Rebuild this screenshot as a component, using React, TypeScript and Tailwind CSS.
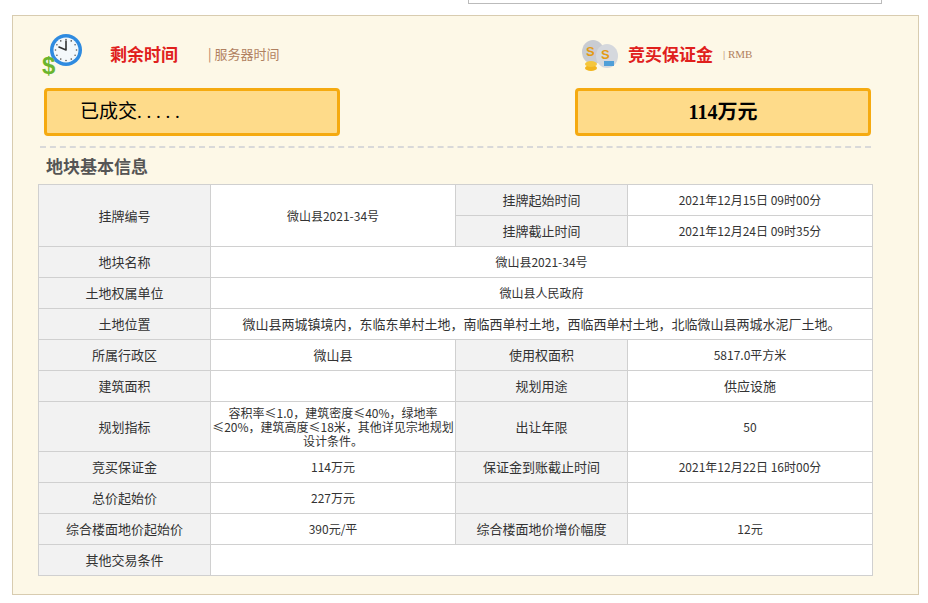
import React from "react";

const L = "bg-[#f2f2f2] text-center border border-[#d0d0d0] text-[13px] text-[#333]";
const V = "bg-white text-center border border-[#d0d0d0] text-[12px] text-[#333]";

function Clock() {
  return (
    <svg width="48" height="48" viewBox="0 0 48 48">
      <circle cx="28" cy="20" r="16" fill="#2f8be0" />
      <circle cx="28" cy="20" r="12.5" fill="#f4f8fb" />
      {[0, 1, 2, 3, 4, 5, 6, 7, 8, 9, 10, 11].map((i) => {
        const a = (i * Math.PI) / 6;
        return <circle key={i} cx={28 + 10.5 * Math.sin(a)} cy={20 - 10.5 * Math.cos(a)} r="0.8" fill="#555" />;
      })}
      <path d="M28 20 L28 11 M28 20 L21 17" stroke="#333" strokeWidth="1.6" strokeLinecap="round" />
      <text x="4" y="44" fontSize="24" fontWeight="bold" fill="#6ab52d" fontFamily="Liberation Sans, sans-serif">$</text>
    </svg>
  );
}

function Money() {
  return (
    <svg width="48" height="48" viewBox="0 0 48 48">
      <ellipse cx="15" cy="22" rx="11" ry="12" fill="#c9ccd2" />
      <ellipse cx="29" cy="26" rx="11" ry="12" fill="#d5d8dd" />
      <text x="8" y="26" fontSize="13" fontWeight="bold" fill="#e39b12" fontFamily="Liberation Sans, sans-serif">S</text>
      <text x="23" y="29" fontSize="13" fontWeight="bold" fill="#e39b12" fontFamily="Liberation Sans, sans-serif">S</text>
      <rect x="26" y="31" width="10" height="5" fill="#4f9fd8" />
      <ellipse cx="13" cy="38" rx="6" ry="3" fill="#f2b51d" />
      <ellipse cx="13" cy="34" rx="6" ry="3" fill="#f5c63b" />
    </svg>
  );
}

export default function App() {
  return (
    <div className="w-[928px] h-[603px] bg-white relative" style={{ fontFamily: '"Liberation Serif", "Noto Sans CJK SC", serif' }}>
      <div className="absolute left-[468px] top-[-4px] w-[414px] h-[8px] border border-[#bbb] bg-white" />
      <div className="absolute left-[12px] top-[15px] w-[907px] h-[580px] bg-[#fdf8e7] border border-[#d8ccb0] px-[25px]">
        <div className="flex h-[72px] items-center pt-[4px]">
          <div className="flex items-center w-[540px]">
            <Clock />
            <span className="ml-[24px] text-[17px] font-bold text-[#e0201c]" style={{ fontFamily: '"Noto Sans CJK SC", sans-serif' }}>剩余时间</span>
            <span className="ml-[30px] text-[13px] text-[#b08060]" style={{ fontFamily: '"Noto Sans CJK SC", sans-serif' }}>| 服务器时间</span>
          </div>
          <div className="flex items-center">
            <Money />
            <span className="ml-[2px] text-[17px] font-bold text-[#e0201c]" style={{ fontFamily: '"Noto Sans CJK SC", sans-serif' }}>竞买保证金</span>
            <span className="ml-[10px] text-[11px] text-[#b08060]">| RMB</span>
          </div>
        </div>
        <div className="flex justify-between pl-[6px] pr-[22px]">
          <div className="w-[296px] h-[48px] rounded-[4px] border-[3px] border-[#f5aa10] bg-[#fedb8a] flex items-center pl-[33px] text-[19px] text-black">已成交. . . . .</div>
          <div className="w-[296px] h-[48px] rounded-[4px] border-[3px] border-[#f5aa10] bg-[#fedb8a] flex items-center justify-center text-[20px] font-bold text-black">114万元</div>
        </div>
        <div className="mt-[10px] mr-[22px] ml-[2px] border-t-2 border-dashed border-[#d9d9d9]" />
        <div className="h-[36px] flex items-center pl-[8px] text-[17px] font-bold text-[#555]" style={{ fontFamily: '"Noto Sans CJK SC", sans-serif' }}>地块基本信息</div>
        <table className="border-collapse w-[834px] table-fixed" style={{ fontFamily: '"Noto Sans CJK SC", sans-serif' }}>
          <colgroup>
            <col className="w-[172px]" /><col className="w-[245px]" /><col className="w-[172px]" /><col className="w-[245px]" />
          </colgroup>
          <tbody>
            <tr className="h-[31px]"><td rowSpan={2} className={L}>挂牌编号</td><td rowSpan={2} className={V}>微山县2021-34号</td><td className={L}>挂牌起始时间</td><td className={V}>2021年12月15日 09时00分</td></tr>
            <tr className="h-[31px]"><td className={L}>挂牌截止时间</td><td className={V}>2021年12月24日 09时35分</td></tr>
            <tr className="h-[31px]"><td className={L}>地块名称</td><td colSpan={3} className={V}>微山县2021-34号</td></tr>
            <tr className="h-[31px]"><td className={L}>土地权属单位</td><td colSpan={3} className={V}>微山县人民政府</td></tr>
            <tr className="h-[31px]"><td className={L}>土地位置</td><td colSpan={3} className={V + " text-[13px]"}>微山县两城镇境内，东临东单村土地，南临西单村土地，西临西单村土地，北临微山县两城水泥厂土地。</td></tr>
            <tr className="h-[31px]"><td className={L}>所属行政区</td><td className={V + " text-[13px]"}>微山县</td><td className={L}>使用权面积</td><td className={V}>5817.0平方米</td></tr>
            <tr className="h-[31px]"><td className={L}>建筑面积</td><td className={V}></td><td className={L}>规划用途</td><td className={V + " text-[13px]"}>供应设施</td></tr>
            <tr className="h-[50px]"><td className={L}>规划指标</td><td className={V + " leading-[14px] text-[12px]"}>容积率≤1.0，建筑密度≤40%，绿地率≤20%，建筑高度≤18米，其他详见宗地规划设计条件。</td><td className={L}>出让年限</td><td className={V}>50</td></tr>
            <tr className="h-[31px]"><td className={L}>竞买保证金</td><td className={V}>114万元</td><td className={L}>保证金到账截止时间</td><td className={V}>2021年12月22日 16时00分</td></tr>
            <tr className="h-[31px]"><td className={L}>总价起始价</td><td className={V}>227万元</td><td className={L}></td><td className={V}></td></tr>
            <tr className="h-[31px]"><td className={L}>综合楼面地价起始价</td><td className={V}>390元/平</td><td className={L}>综合楼面地价增价幅度</td><td className={V}>12元</td></tr>
            <tr className="h-[31px]"><td className={L}>其他交易条件</td><td colSpan={3} className={V}></td></tr>
          </tbody>
        </table>
      </div>
    </div>
  );
}
